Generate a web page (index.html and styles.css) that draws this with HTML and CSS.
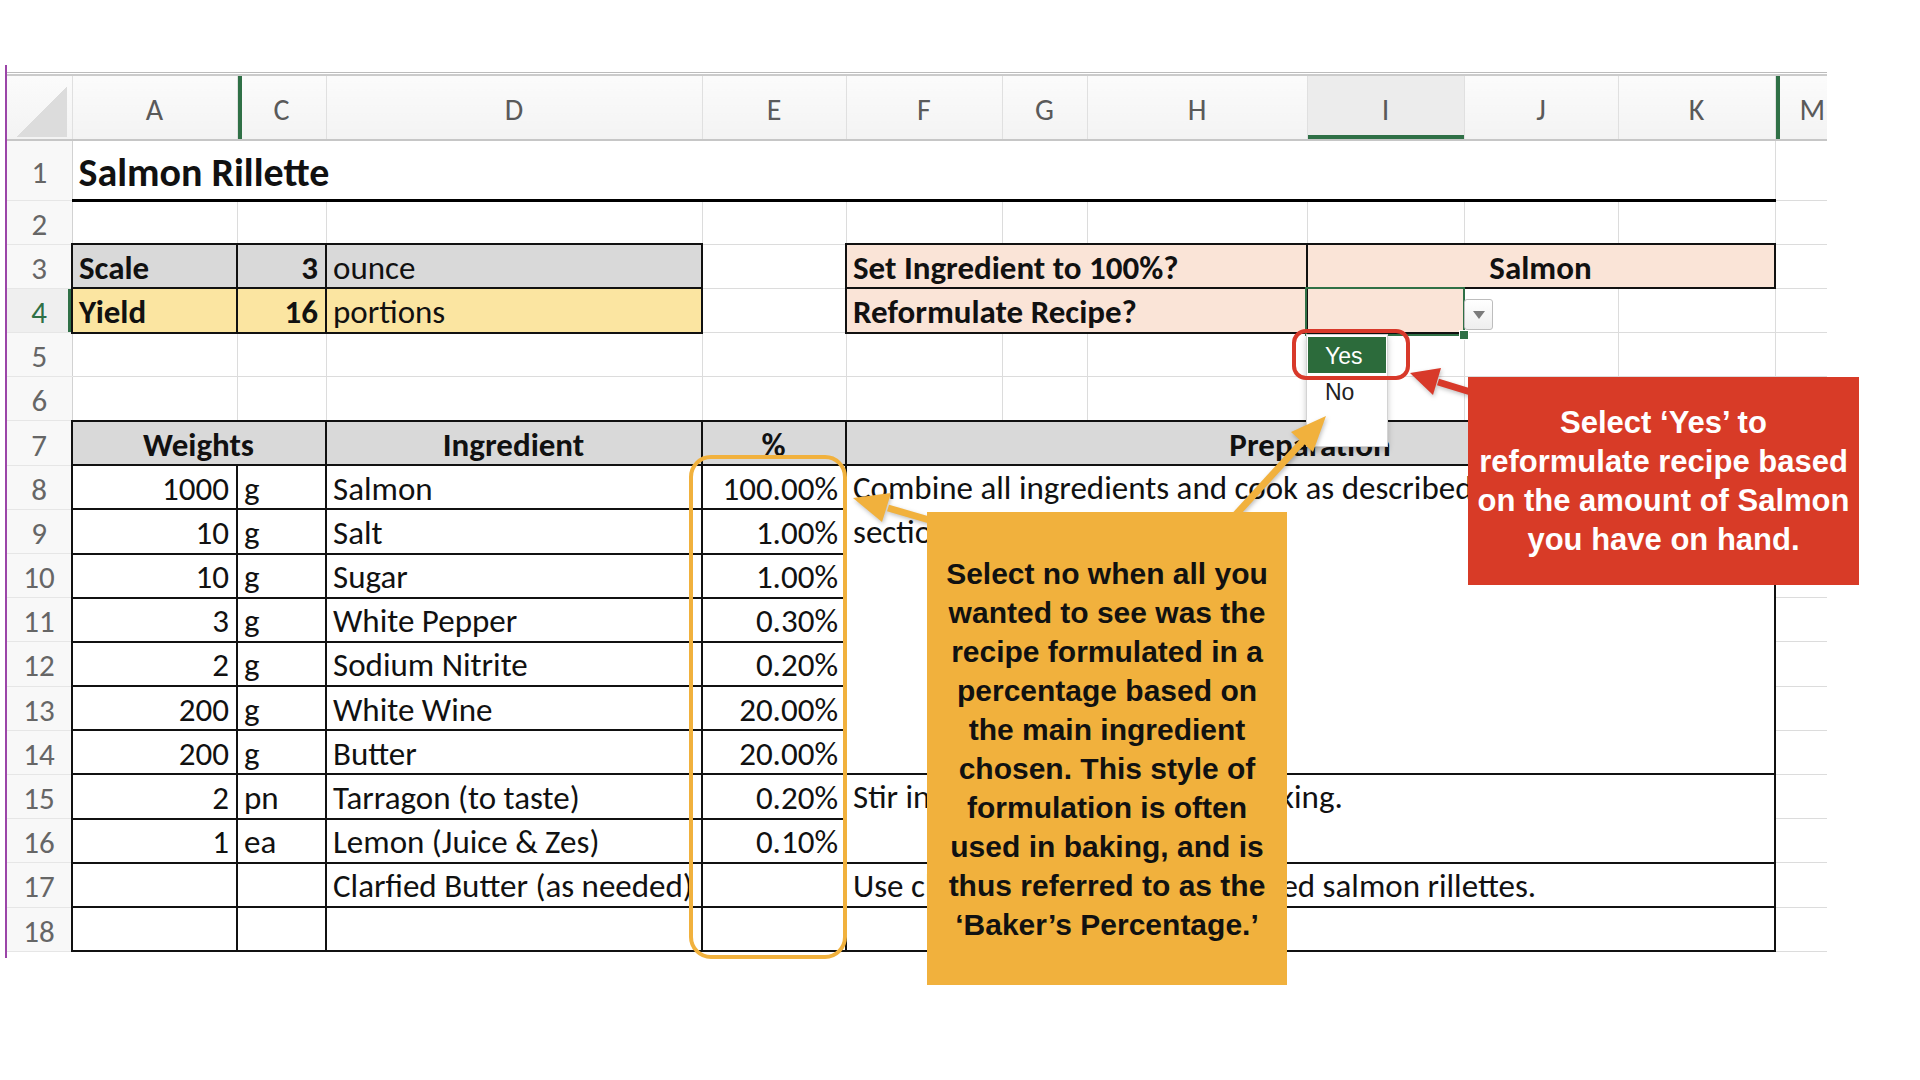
FILE: index.html
```html
<!DOCTYPE html>
<html>
<head>
    <title>Salmon Rillette</title>
    <link rel="stylesheet" href="styles.css">
</head>
<body>
<div class="page">
    <div class="sheet-wrap">
        <div class="top-rule"></div>
        <table class="sheet">
            <colgroup>
                <col class="c-hdr"><col class="c-a"><col class="c-c"><col class="c-d"><col class="c-e"><col class="c-f">
                <col class="c-g"><col class="c-h"><col class="c-i"><col class="c-j"><col class="c-k"><col class="c-m">
            </colgroup>
            <tr class="r-colhdr">
                <th class="corner"><span class="tri"></span></th>
                <th>A</th><th class="hidden-left">C</th><th>D</th><th>E</th><th>F</th><th>G</th><th>H</th>
                <th class="sel-col">I</th><th>J</th><th>K</th><th class="hidden-left last">M</th>
            </tr>
            <tr class="r-title">
                <th class="rn">1</th>
                <td colspan="10" class="title">Salmon Rillette</td>
                <td></td>
            </tr>
            <tr class="r">
                <th class="rn">2</th>
                <td></td><td></td><td></td><td></td><td></td><td></td><td></td><td></td><td></td><td></td><td></td>
            </tr>
            <tr class="r">
                <th class="rn">3</th>
                <td class="gray box b">Scale</td>
                <td class="gray box b num">3</td>
                <td class="gray box">ounce</td>
                <td></td>
                <td colspan="3" class="peach box b">Set Ingredient to 100%?</td>
                <td colspan="3" class="peach box b ctr">Salmon</td>
                <td></td>
            </tr>
            <tr class="r">
                <th class="rn sel-row">4</th>
                <td class="gold box b">Yield</td>
                <td class="gold box b num">16</td>
                <td class="gold box">portions</td>
                <td></td>
                <td colspan="3" class="peach box b">Reformulate Recipe?</td>
                <td class="peach box"></td>
                <td></td><td></td><td></td>
            </tr>
            <tr class="r">
                <th class="rn">5</th>
                <td></td><td></td><td></td><td></td><td></td><td></td><td></td><td></td><td></td><td></td><td></td>
            </tr>
            <tr class="r">
                <th class="rn">6</th>
                <td></td><td></td><td></td><td></td><td></td><td></td><td></td><td></td><td></td><td></td><td></td>
            </tr>
            <tr class="r">
                <th class="rn">7</th>
                <td colspan="2" class="gray box b ctr">Weights</td>
                <td class="gray box b ctr">Ingredient</td>
                <td class="gray box b ctr">%</td>
                <td colspan="6" class="gray box b ctr">Preparation</td>
                <td></td>
            </tr>
            <tr class="r">
                <th class="rn">8</th>
                <td class="box num">1000</td><td class="box">g</td><td class="box">Salmon</td><td class="box num">100.00%</td>
                <td colspan="6" rowspan="7" class="box prep">Combine all ingredients and cook as described<br>section 4 of the recipe.</td>
                <td></td>
            </tr>
            <tr class="r">
                <th class="rn">9</th>
                <td class="box num">10</td><td class="box">g</td><td class="box">Salt</td><td class="box num">1.00%</td>
                <td></td>
            </tr>
            <tr class="r">
                <th class="rn">10</th>
                <td class="box num">10</td><td class="box">g</td><td class="box">Sugar</td><td class="box num">1.00%</td>
                <td></td>
            </tr>
            <tr class="r">
                <th class="rn">11</th>
                <td class="box num">3</td><td class="box">g</td><td class="box">White Pepper</td><td class="box num">0.30%</td>
                <td></td>
            </tr>
            <tr class="r">
                <th class="rn">12</th>
                <td class="box num">2</td><td class="box">g</td><td class="box">Sodium Nitrite</td><td class="box num">0.20%</td>
                <td></td>
            </tr>
            <tr class="r">
                <th class="rn">13</th>
                <td class="box num">200</td><td class="box">g</td><td class="box">White Wine</td><td class="box num">20.00%</td>
                <td></td>
            </tr>
            <tr class="r">
                <th class="rn">14</th>
                <td class="box num">200</td><td class="box">g</td><td class="box">Butter</td><td class="box num">20.00%</td>
                <td></td>
            </tr>
            <tr class="r">
                <th class="rn">15</th>
                <td class="box num">2</td><td class="box">pn</td><td class="box">Tarragon (to taste)</td><td class="box num">0.20%</td>
                <td colspan="6" rowspan="2" class="box prep">Stir in all the tarragon before baking.</td>
                <td></td>
            </tr>
            <tr class="r">
                <th class="rn">16</th>
                <td class="box num">1</td><td class="box">ea</td><td class="box">Lemon (Juice &amp; Zes)</td><td class="box num">0.10%</td>
                <td></td>
            </tr>
            <tr class="r">
                <th class="rn">17</th>
                <td class="box"></td><td class="box"></td><td class="box">Clarfied Butter (as needed)</td><td class="box"></td>
                <td colspan="6" class="box">Use clarified butter to glaze chilled salmon rillettes.</td>
                <td></td>
            </tr>
            <tr class="r">
                <th class="rn">18</th>
                <td class="box"></td><td class="box"></td><td class="box"></td><td class="box"></td>
                <td colspan="6" class="box"></td>
                <td></td>
            </tr>
        </table>
    </div>

    <!-- selection + data validation dropdown on I4 -->
    <div class="sel-cell"></div>
    <div class="dd-btn"><span class="dd-caret"></span></div>
    <div class="dd-list">
        <div class="dd-item on">Yes</div>
        <div class="dd-item">No</div>
    </div>

    <div class="ring ring-red"></div>
    <div class="ring ring-orange"></div>

    <svg class="arrows" width="1920" height="1080" viewBox="0 0 1920 1080">
        <line x1="1005" y1="542" x2="888" y2="508" stroke="#f1b13d" stroke-width="7"/>
        <polygon points="853,498 891,493 882,522" fill="#f1b13d"/>
        <line x1="1208" y1="545" x2="1304" y2="440" stroke="#f1b13d" stroke-width="7"/>
        <polygon points="1326,416 1313,452 1291,432" fill="#f1b13d"/>
        <line x1="1500" y1="401" x2="1438" y2="382" stroke="#d8392a" stroke-width="7"/>
        <polygon points="1410,373 1441,368 1433,395" fill="#d8392a"/>
    </svg>

    <div class="note note-orange">
        Select no when all you<br>
        wanted to see was the<br>
        recipe formulated in a<br>
        percentage based on<br>
        the main ingredient<br>
        chosen. This style of<br>
        formulation is often<br>
        used in baking, and is<br>
        thus referred to as the<br>
        ‘Baker’s Percentage.’
    </div>
    <div class="note note-red">
        Select ‘Yes’ to<br>
        reformulate recipe based<br>
        on the amount of Salmon<br>
        you have on hand.
    </div>
</div>
</body>
</html>
```

FILE: styles.css
```css
body {
    margin: 0;
    background: #fff;
    font-family: Carlito, Lato, "Liberation Sans", sans-serif;
}
.page {
    position: relative;
    width: 1920px;
    height: 1080px;
    overflow: hidden;
}

/* ---------- sheet ---------- */
.sheet-wrap {
    margin: 65px 0 0 5px;
    width: 1820px;
    border-left: 2px solid #9b45a8;
    padding: 7px 0 6px;
}
.top-rule {
    height: 1px;
    border-top: 1px solid #bcbcbc;
    border-bottom: 2px solid #cbcbcb;
}
.sheet {
    border-collapse: collapse;
    table-layout: fixed;
    width: 1820px;
    font-size: 33px;
    line-height: 1;
    color: #111;
}
.c-hdr { width: 65px; }
.c-a { width: 165px; }
.c-c { width: 89px; }
.c-d { width: 376px; }
.c-e { width: 144px; }
.c-f { width: 156px; }
.c-g { width: 85px; }
.c-h { width: 220px; }
.c-i { width: 157px; }
.c-j { width: 154px; }
.c-k { width: 157px; }
.c-m { width: 52px; }

.r-colhdr { height: 64px; }
.r-title { height: 60px; }
.r { height: 44.2px; }

.r-colhdr th {
    background: linear-gradient(#fbfbfb, #f3f3f3);
    color: #5a5a5a;
    font-weight: normal;
    font-size: 30px;
    border-right: 1px solid #e0e0e0;
    border-bottom: 2px solid #c6c6c6;
    padding: 4px 0 0;
}
.r-colhdr th.last {
    border-right: none;
    padding-left: 22px;
}
.r-colhdr .sel-col {
    background: #ececec;
    box-shadow: inset 0 -4px 0 #2f7046;
}
.r-colhdr .hidden-left {
    box-shadow: inset 4px 0 0 #2f7046;
}
.corner {
    vertical-align: bottom;
}
.tri {
    display: block;
    width: 50px;
    height: 50px;
    margin: 0 5px 2px auto;
    background: linear-gradient(to bottom right, transparent 50%, #dcdcdc 50%);
}

.rn {
    background: #f8f8f8;
    color: #666;
    font-weight: normal;
    font-size: 31px;
    text-align: center;
    padding: 4px 0 0;
    border-top: 1px solid #e6e6e6;
    border-bottom: 1px solid #e6e6e6;
    border-right: 1px solid #d2d2d2;
}
.rn.sel-row {
    background: #efefef;
    color: #2f7046;
    box-shadow: inset -3px 0 0 #2f7046;
}

.sheet td {
    border: 1px solid #dcdcdc;
    padding: 4px 7px 0 6px;
    white-space: nowrap;
    overflow: visible;
    vertical-align: middle;
}
.sheet td:last-child { border-right: none; }
.sheet td.title {
    font-size: 40px;
    font-weight: bold;
    border-left: none;
    border-top: none;
    border-bottom: 3px solid #000;
    padding-top: 6px;
}
.sheet td.box { border: 2px solid #111; }
.sheet td.prep {
    vertical-align: top;
    line-height: 44px;
    padding-top: 0;
}
.b { font-weight: bold; }
.num { text-align: right; }
.ctr { text-align: center; }
.gray { background: #d9d9d9; }
.gold { background: #fbe5a1; }
.peach { background: #fae4d7; }

/* ---------- I4 dropdown ---------- */
.sel-cell {
    position: absolute;
    left: 1305px;
    top: 287px;
    width: 160px;
    height: 49px;
    box-sizing: border-box;
    border: 2px solid #2f7046;
}
.sel-cell::after {
    content: "";
    position: absolute;
    right: -6px;
    bottom: -6px;
    width: 8px;
    height: 8px;
    background: #2f7046;
    border: 1px solid #fff;
}
.dd-btn {
    position: absolute;
    left: 1464px;
    top: 299px;
    width: 29px;
    height: 31px;
    box-sizing: border-box;
    border: 1px solid #bdbdbd;
    border-radius: 3px;
    background: linear-gradient(#ffffff, #eeeeee);
    display: flex;
    align-items: center;
    justify-content: center;
}
.dd-caret {
    width: 0;
    height: 0;
    border-left: 6px solid transparent;
    border-right: 6px solid transparent;
    border-top: 8px solid #7b7b7b;
}
.dd-list {
    position: absolute;
    left: 1306px;
    top: 334px;
    width: 82px;
    height: 113px;
    box-sizing: border-box;
    padding: 2px 1px;
    background: #fff;
    border: 1px solid #d3d3d3;
    box-shadow: 0 3px 6px rgba(0, 0, 0, 0.22);
    font-family: "Liberation Sans", Arial, sans-serif;
    font-size: 23px;
    color: #222;
}
.dd-item {
    height: 36px;
    line-height: 38px;
    padding-left: 17px;
}
.dd-item.on {
    background: #2c6b3b;
    color: #fff;
}

/* ---------- annotations ---------- */
.ring {
    position: absolute;
    box-sizing: border-box;
    border-style: solid;
}
.ring-red {
    left: 1292px;
    top: 329px;
    width: 118px;
    height: 51px;
    border-width: 4px;
    border-color: #d8392a;
    border-radius: 14px;
}
.ring-orange {
    left: 689px;
    top: 455px;
    width: 158px;
    height: 504px;
    border-width: 4px;
    border-color: #f1b13d;
    border-radius: 22px;
}
.arrows {
    position: absolute;
    left: 0;
    top: 0;
    filter: drop-shadow(1px 2px 2px rgba(0, 0, 0, 0.25));
}
.note {
    position: absolute;
    box-sizing: border-box;
    display: flex;
    align-items: center;
    justify-content: center;
    text-align: center;
    white-space: nowrap;
    font-family: "Liberation Sans", Arial, sans-serif;
    font-weight: bold;
    font-size: 30px;
    line-height: 39px;
}
.note-orange {
    left: 927px;
    top: 512px;
    width: 360px;
    height: 473px;
    background: #f1b13d;
    color: #111;
}
.note-red {
    left: 1468px;
    top: 377px;
    width: 391px;
    height: 208px;
    background: #d83b27;
    color: #fff;
    font-size: 31px;
}
```
